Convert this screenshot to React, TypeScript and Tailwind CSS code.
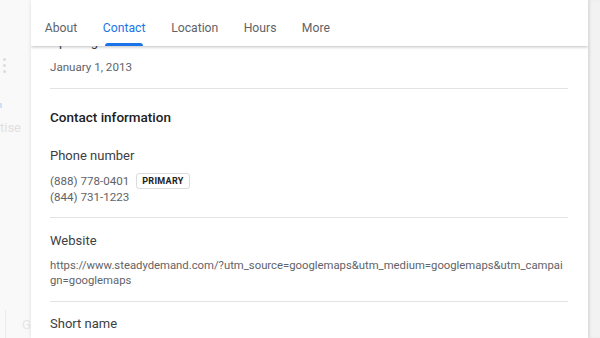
import React from 'react';

const tabs = ['About', 'Contact', 'Location', 'Hours', 'More'];

function Divider() {
  return <div className="h-px w-full bg-[#e3e3e3]" />;
}

export default function App() {
  return (
    <div className="flex h-[338px] w-[600px] overflow-hidden bg-[#f9f9f9] font-['Roboto',sans-serif]">
      {/* faded page behind the dialog */}
      <div className="relative w-[31px] shrink-0 overflow-hidden text-[#d9d9d9]">
        <div className="absolute left-[3px] top-[58px] flex flex-col gap-[3px]">
          <span className="h-[3px] w-[3px] rounded-full bg-[#dcdcdc]" />
          <span className="h-[3px] w-[3px] rounded-full bg-[#dcdcdc]" />
          <span className="h-[3px] w-[3px] rounded-full bg-[#dcdcdc]" />
        </div>
        <span className="absolute left-0 top-[103px] h-[5px] w-[2px] bg-[#cfe0fb]" />
        <span className="absolute left-0 top-[119px] text-[13px] leading-[18px] text-[#e0e0e0]">tise</span>
        <span className="absolute left-[5px] top-[310px] h-[28px] w-px bg-[#ececec]" />
        <span className="absolute left-[22px] top-[316px] text-[13px] leading-[18px] text-[#e6e6e6]">G</span>
      </div>

      {/* dialog */}
      <div className="relative h-full w-[557px] shrink-0 overflow-hidden bg-white shadow-[0_0_4px_rgba(0,0,0,0.12)]">
        <div className="absolute left-0 right-0 top-0 z-10 flex h-[46px] items-end bg-white pl-[1px] shadow-[0_1px_3px_rgba(0,0,0,0.25)]">
          {tabs.map((t) => (
            <div
              key={t}
              className={`relative flex h-full items-center pt-[11px] text-[12.2px] ${
                t === 'Contact' ? 'px-[13px] text-[#1a73e8]' : 'px-[12.7px] text-[#5f6368]'
              }`}
            >
              {t}
              {t === 'Contact' && (
                <span className="absolute bottom-0 left-[15px] right-[15px] h-[3px] rounded-t-[3px] bg-[#1a73e8]" />
              )}
            </div>
          ))}
        </div>

        <div className="flex flex-col pl-[19px] pr-[20px] pt-[32px]">
          <div className="text-[13px] leading-[20px] text-[#3c4043]">Opening date</div>
          <div className="mt-[7px] text-[11.6px] leading-[16px] text-[#5f6368]">January 1, 2013</div>
          <div className="mt-[13px]">
            <Divider />
          </div>
          <div className="mt-[18px] text-[13.5px] font-medium leading-[20px] text-[#202124]">Contact information</div>
          <div className="mt-[19px] text-[13px] leading-[20px] text-[#3c4043]">Phone number</div>
          <div className="mt-[7px] flex items-center gap-[7px] text-[11.6px] leading-[16px] text-[#5f6368]">
            <span>(888) 778-0401</span>
            <span className="rounded-[3px] border border-[#dadce0] px-[5px] text-[9px] font-bold leading-[14px] tracking-[0.3px] text-[#202124]">
              PRIMARY
            </span>
          </div>
          <div className="text-[11.6px] leading-[16px] text-[#5f6368]">(844) 731-1223</div>
          <div className="mt-[12px]">
            <Divider />
          </div>
          <div className="mt-[13px] text-[13px] leading-[20px] text-[#3c4043]">Website</div>
          <div className="mt-[7px] break-all text-[11.3px] leading-[15px] text-[#5f6368]">
            https://www.steadydemand.com/?utm_source=googlemaps&amp;utm_medium=googlemaps&amp;utm_campaign=googlemaps
          </div>
          <div className="mt-[13px]">
            <Divider />
          </div>
          <div className="mt-[12px] text-[13px] leading-[20px] text-[#3c4043]">Short name</div>
        </div>
      </div>

      {/* right edge */}
      <div className="h-full flex-1 bg-[#f2f2f2] shadow-[inset_2px_0_3px_rgba(0,0,0,0.05)]" />
    </div>
  );
}
